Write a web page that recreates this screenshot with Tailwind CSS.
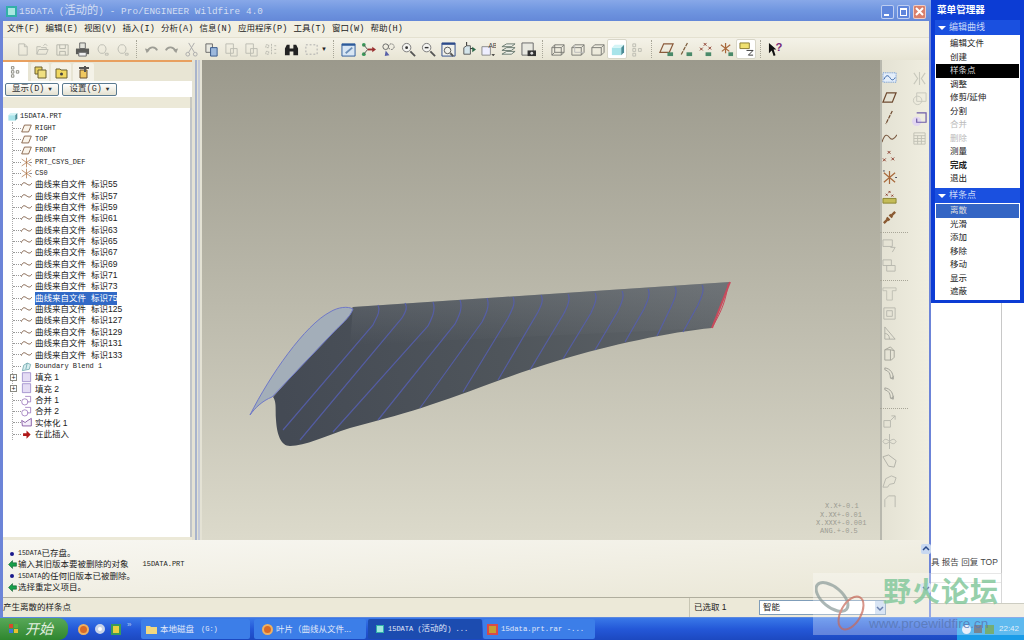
<!DOCTYPE html>
<html lang="en">
<head>
    <meta charset="UTF-8">
    <meta name="viewport" content="width=device-width, initial-scale=1.0">
    <title>15DATA - Pro/ENGINEER Wildfire 4.0</title>
    <script src="https://cdn.jsdelivr.net/npm/@tailwindcss/browser@4"></script>
</head>
<body class="bg-white">
    <!-- Icon sprite -->
    <svg class="hidden">
        <symbol id="new" viewBox="0 0 16 16"><path d="M4 2h6l3 3v9H4zM10 2v3h3" fill="none" stroke="#bcbcb2"/></symbol>
        <symbol id="open" viewBox="0 0 16 16"><path d="M2 13V5h4l1 1h5v2M2 13l2-5h10l-2 5zM9 4l2-2 2 2" fill="none" stroke="#bcbcb2"/></symbol>
        <symbol id="save" viewBox="0 0 16 16"><path d="M2 3h12v11H2zM5 3v4h6V3M5 14v-4h6v4" fill="none" stroke="#b4b4aa"/></symbol>
        <symbol id="print" viewBox="0 0 16 16"><path d="M5 1h6v6H5z" fill="#e4e4dc" stroke="#666"/><path d="M1 7h14v6H1z" fill="#5b5b58"/><path d="M4 11h8v4H4z" fill="#eee" stroke="#666"/></symbol>
        <symbol id="fade1" viewBox="0 0 16 16"><path d="M6 3h3a5 5 0 0 1 0 9H6a5 5 0 0 1 0-9zM11 12h3v2h-3z" fill="none" stroke="#bcbcb2"/></symbol>
        <symbol id="undo" viewBox="0 0 16 16"><path d="M4 10c1-5 8-6 10-1" fill="none" stroke="#9d9d95" stroke-width="2"/><path d="M1 7l5 1-3 4z" fill="#9d9d95"/></symbol>
        <symbol id="redo" viewBox="0 0 16 16"><path d="M12 10C11 5 4 4 2 9" fill="none" stroke="#9d9d95" stroke-width="2"/><path d="M15 7l-5 1 3 4z" fill="#9d9d95"/></symbol>
        <symbol id="cut" viewBox="0 0 16 16"><path d="M5 1l6 10M11 1L5 11" stroke="#aaa" fill="none"/><circle cx="4" cy="13" r="2" fill="none" stroke="#aaa"/><circle cx="12" cy="13" r="2" fill="none" stroke="#aaa"/></symbol>
        <symbol id="copy" viewBox="0 0 16 16"><path d="M2 2h7v9H2z" fill="#e8e8e0" stroke="#666"/><path d="M7 6h7v9H7z" fill="#9cb8dc" stroke="#33558a"/></symbol>
        <symbol id="paste" viewBox="0 0 16 16"><path d="M2 2h8v10H2zM7 7h7v8H7z" fill="none" stroke="#bcbcb2"/></symbol>
        <symbol id="sym" viewBox="0 0 16 16"><path d="M2 3h3v3H2zM2 10h3v3H2zM8 2v12M11 4h3M11 8h3M11 12h3" fill="none" stroke="#b8b8ae" stroke-dasharray="2 1"/></symbol>
        <symbol id="binoc" viewBox="0 0 16 16"><path d="M1 14V7l2-4h3v11zM10 14V3h3l2 4v7zM6 7h4v3H6z" fill="#222"/></symbol>
        <symbol id="dash" viewBox="0 0 16 16"><path d="M2 3h12v10H2z" fill="none" stroke="#aaa" stroke-dasharray="2 2"/></symbol>
        <symbol id="fit" viewBox="0 0 16 16"><path d="M1 2h14v13H1z" fill="#d8e6f4" stroke="#2c5a9a"/><path d="M1 2h14v2H1z" fill="#2c5a9a"/><path d="M5 12l7-6" stroke="#6c8fb8" stroke-width="2"/></symbol>
        <symbol id="repaint" viewBox="0 0 16 16"><circle cx="3" cy="3" r="2" fill="#3a9a5a"/><circle cx="3" cy="13" r="2" fill="#3a9a5a"/><path d="M3 3l4 5-4 5" fill="none" stroke="#555"/><path d="M7 8h6" stroke="#9a3030" stroke-width="2"/><path d="M12 5l4 3-4 3z" fill="#9a3030"/></symbol>
        <symbol id="spin" viewBox="0 0 16 16"><circle cx="5" cy="5" r="3" fill="none" stroke="#666"/><circle cx="11" cy="5" r="3" fill="none" stroke="#666" stroke-dasharray="2 1"/><path d="M5 9l4 5-5 1z" fill="#5a62a8"/></symbol>
        <symbol id="zoomin" viewBox="0 0 16 16"><circle cx="6" cy="6" r="4.5" fill="#f4f4f0" stroke="#777"/><circle cx="6" cy="6" r="1.5" fill="#333"/><path d="M10 10l5 5" stroke="#555" stroke-width="2"/></symbol>
        <symbol id="zoomout" viewBox="0 0 16 16"><circle cx="6" cy="6" r="4.5" fill="#f4f4f0" stroke="#777"/><path d="M4 6h4" stroke="#333" stroke-width="1.5"/><path d="M10 10l5 5" stroke="#555" stroke-width="2"/></symbol>
        <symbol id="refit" viewBox="0 0 16 16"><path d="M1 1h14v14H1z" fill="#f0f0ea" stroke="#2c4a8a"/><path d="M1 1h14v2H1z" fill="#2c4a8a"/><circle cx="7" cy="9" r="3.5" fill="none" stroke="#555"/><path d="M10 12l3 3" stroke="#555" stroke-width="2"/></symbol>
        <symbol id="orient" viewBox="0 0 16 16"><path d="M3 6l3-2h4v9H3z" fill="#d4e4ea" stroke="#555"/><path d="M6 0v4" stroke="#222"/><path d="M10 7h3" stroke="#222"/><path d="M12 5l4 3-4 3z" fill="#2e6a4a"/></symbol>
        <symbol id="saved" viewBox="0 0 16 16"><path d="M1 5h9v9H1z" fill="#eef" stroke="#888"/><text x="8" y="6" font-size="7" fill="#444" font-family="Liberation Sans">AB</text><path d="M11 13h4l-2 2z" fill="#222"/></symbol>
        <symbol id="layers" viewBox="0 0 16 16"><path d="M1 5l5-3h9l-4 3zM1 9l5-3h9l-4 3zM1 13l5-3h9l-4 3z" fill="#eef0e8" stroke="#68786e"/></symbol>
        <symbol id="cam" viewBox="0 0 16 16"><path d="M1 1h12v13H1z" fill="#e8e8e0" stroke="#666"/><path d="M7 9h9v6H7z" fill="#333"/><circle cx="11.500" cy="12" r="1.500" fill="#ddd"/></symbol>
        <symbol id="wire" viewBox="0 0 16 16"><path d="M2 6l3-3h10v8l-3 3H2zM2 6h10v8M12 6l3-3M5 3v8h10M5 11l-3 3" fill="none" stroke="#7a7a74"/></symbol>
        <symbol id="hid" viewBox="0 0 16 16"><path d="M2 6l3-3h10v8l-3 3H2zM2 6h10v8M12 6l3-3" fill="none" stroke="#7a7a74"/><path d="M5 3v8h10" fill="none" stroke="#bbb"/></symbol>
        <symbol id="nohid" viewBox="0 0 16 16"><path d="M2 6l3-3h10v8l-3 3H2zM2 6h10v8M12 6l3-3" fill="none" stroke="#7a7a74"/></symbol>
        <symbol id="shade" viewBox="0 0 16 16"><path d="M2 6h10v8H2z" fill="#a8e4ea"/><path d="M2 6l3-3h10l-3 3z" fill="#d4f4f6"/><path d="M12 6l3-3v8l-3 3z" fill="#4a8c96"/></symbol>
        <symbol id="mtree" viewBox="0 0 16 16"><path d="M3 2h3v3H3zM3 7h3v3H3zM3 12h3v3H3zM9 7h3v3H9z" fill="none" stroke="#77776e"/></symbol>
        <symbol id="mtreef" viewBox="0 0 16 16"><path d="M3 2h3v3H3zM3 7h3v3H3zM3 12h3v3H3zM9 7h3v3H9z" fill="none" stroke="#bcbcb2"/></symbol>
        <symbol id="plane" viewBox="0 0 16 16"><path d="M5 3h10l-4 10H1z" fill="none" stroke="#6e4a30" stroke-width="1.300"/></symbol>
        <symbol id="planeg" viewBox="0 0 16 16"><path d="M5 2h10l-4 9H1z" fill="none" stroke="#8a5a3a" stroke-width="1.300"/><path d="M9 11h6v4H9z" fill="#4a8a6a"/></symbol>
        <symbol id="axisg" viewBox="0 0 16 16"><path d="M9 1L2 14" stroke="#7a5a3a" stroke-dasharray="4 1" stroke-width="1.300"/><path d="M8 11h6v4H8z" fill="#4a8a6a"/></symbol>
        <symbol id="ptsg" viewBox="0 0 16 16"><path d="M5 1l3 3M8 1L5 4M1 6l3 3M4 6L1 9M10 5l3 3M13 5l-3 3" stroke="#8a3a2a"/><path d="M7 11h6v4H7z" fill="#4a8a6a"/></symbol>
        <symbol id="csysg" viewBox="0 0 16 16"><path d="M7 1v11M2 3l9 7M12 3l-9 7" stroke="#a8683a" stroke-width="1.300"/><path d="M10 11h5v4h-5z" fill="#4a8a6a"/></symbol>
        <symbol id="annot" viewBox="0 0 16 16"><path d="M1 1h10v6H1z" fill="#f0e070" stroke="#8a7a30"/><path d="M8 9h7l-5 5h5" fill="none" stroke="#333"/></symbol>
        <symbol id="help" viewBox="0 0 16 16"><path d="M1 1l8 7H6l2 6-2 1-2-6-3 3z" fill="#111"/><text x="8" y="10" font-size="12" font-weight="700" fill="#7a2a7a" font-family="Liberation Sans">?</text></symbol>
        <symbol id="sketch" viewBox="0 0 16 16"><path d="M1 3h14v10H1z" fill="#e4eefa" stroke="#5a8ad0" stroke-dasharray="1 1"/><path d="M2 10c3-6 5-4 7-1s4 1 5-1" fill="none" stroke="#2a5aa0"/></symbol>
        <symbol id="axis" viewBox="0 0 16 16"><path d="M11 1L4 15" stroke="#6e4a30" stroke-dasharray="4 1" stroke-width="1.300"/></symbol>
        <symbol id="curve" viewBox="0 0 16 16"><path d="M0 13C3 3 6 5 8 8s5 2 8-3" fill="none" stroke="#7a5a42" stroke-width="1.200"/></symbol>
        <symbol id="pts" viewBox="0 0 16 16"><path d="M6 1l3 3M9 1L6 4M1 9l3 3M4 9l-3 3M10 8l3 3M13 8l-3 3" stroke="#8a3a2a"/></symbol>
        <symbol id="csys" viewBox="0 0 16 16"><path d="M8 1v14M2 3l12 10M14 3L2 13" stroke="#a8683a" stroke-width="1.300"/><path d="M1 1h2M14 8h2" stroke="#445"/></symbol>
        <symbol id="ptsy" viewBox="0 0 16 16"><path d="M7 1l2 2M9 1L7 3M4 4l2 2M6 4L4 6M10 5l2 2M12 5l-2 2" stroke="#8a3a2a"/><path d="M1 9h14v5H1z" fill="#c4bc58" stroke="#8a8430"/></symbol>
        <symbol id="chain" viewBox="0 0 16 16"><path d="M2 14l4-4M10 6l4-4M5 8l3 3M8 5l3 3" stroke="#8a5a32" stroke-width="2.500" fill="none"/></symbol>
        <symbol id="mirror" viewBox="0 0 16 16"><path d="M8 1v14M2 2l4 6-4 6M14 2l-4 6 4 6" fill="none" stroke="#c8c8bc" stroke-width="1.200"/></symbol>
        <symbol id="trans" viewBox="0 0 16 16"><path d="M5 2h10v9H5z" fill="none" stroke="#c8c8bc"/><circle cx="6" cy="10" r="4.500" fill="none" stroke="#c8c8bc"/></symbol>
        <symbol id="purple" viewBox="0 0 16 16"><circle cx="5" cy="11" r="5" fill="#e2d6f0"/><path d="M5 2h10v10H5v-4" fill="none" stroke="#6e5ca8" stroke-width="1.300"/></symbol>
        <symbol id="grid" viewBox="0 0 16 16"><path d="M2 2h12v12H2zM2 5h12M2 8h12M2 11h12M6 5v9M10 5v9" fill="none" stroke="#c0c0b4"/></symbol>
        <symbol id="box7" viewBox="0 0 16 16"><path d="M1 2h10v7H1zM9 10h5l-3 5" fill="none" stroke="#b8b8ae"/></symbol>
        <symbol id="box2" viewBox="0 0 16 16"><path d="M1 2h9v6H1zM5 8h9v6H5z" fill="none" stroke="#b8b8ae"/></symbol>
        <symbol id="tee" viewBox="0 0 16 16"><path d="M1 2h14v3h-4v10H5V5H1z" fill="none" stroke="#c0c0b4"/></symbol>
        <symbol id="inset" viewBox="0 0 16 16"><path d="M2 2h12v12H2zM5 5h6v6H5z" fill="none" stroke="#b8b8ae"/></symbol>
        <symbol id="draft" viewBox="0 0 16 16"><path d="M3 1v13h11zM3 8c3 0 5 2 5 6" fill="none" stroke="#b0b0a6"/></symbol>
        <symbol id="rib" viewBox="0 0 16 16"><path d="M3 4l6-3 4 4v7l-3 3H3zM3 4h6v11M9 4l4 1" fill="none" stroke="#a4a49a"/></symbol>
        <symbol id="round" viewBox="0 0 16 16"><path d="M3 2c6 1 9 5 9 12l-3-1C9 8 7 5 3 4z" fill="none" stroke="#a0a098"/><path d="M9 13l3 1 1-4z" fill="#a8a8a0"/></symbol>
        <symbol id="move" viewBox="0 0 16 16"><path d="M2 7h7v7H2zM9 7l5-5M10 2h4v4" fill="none" stroke="#b8b8ae"/></symbol>
        <symbol id="spindle" viewBox="0 0 16 16"><path d="M8 0v16M1 8c2-4 5-2 7 0s5 4 7 0c-2-4-5-2-7 0s-5 4-7 0z" fill="none" stroke="#b8b8ae"/></symbol>
        <symbol id="poly" viewBox="0 0 16 16"><path d="M1 3l6-2 8 6-2 7-6-1z" fill="none" stroke="#b0b0a6"/></symbol>
        <symbol id="blend" viewBox="0 0 16 16"><path d="M1 14l3-9 6-3 5 2-2 6-5 1-2 3z" fill="none" stroke="#b8b8ae"/></symbol>
        <symbol id="flat" viewBox="0 0 16 16"><path d="M3 14V6l4-4h7v12" fill="none" stroke="#b8b8ae"/></symbol>
        <symbol id="twave" viewBox="0 0 16 16"><path d="M0 10c3-6 5-5 8-3s5 3 8-1" fill="none" stroke="#7c5a42" stroke-width="1.400"/></symbol>
        <symbol id="tplane" viewBox="0 0 16 16"><path d="M5 3h10l-4 10H1z" fill="#faf4ea" stroke="#7a5238" stroke-width="1.200"/></symbol>
        <symbol id="tcsys" viewBox="0 0 16 16"><path d="M8 1v14M1 3l14 10M15 3L1 13" stroke="#a86a3a"/><path d="M12 8h4" stroke="#556"/></symbol>
        <symbol id="tsurf" viewBox="0 0 16 16"><path d="M2 14l2-8 5-3 5 2-2 7z" fill="#d8eef0" stroke="#5a9aa0"/><path d="M9 3l-2 9" stroke="#5a9aa0"/></symbol>
        <symbol id="tfill" viewBox="0 0 16 16"><path d="M2 1h12v13H2z" fill="#e4dcf4" stroke="#8a78c0"/></symbol>
        <symbol id="tmerge" viewBox="0 0 16 16"><circle cx="5.500" cy="10" r="4.500" fill="#fff" stroke="#8a60b0"/><path d="M6 2h8v8H9" fill="none" stroke="#8a60b0"/></symbol>
        <symbol id="tsolid" viewBox="0 0 16 16"><path d="M1 5l5 3 4-3 5-3v11H2z" fill="#f4eefa" stroke="#7a4a9a" stroke-width="1.200"/></symbol>
        <symbol id="tins" viewBox="0 0 16 16"><path d="M3 6h5V2l6 6-6 6v-4H3z" fill="#b01818"/></symbol>
        <symbol id="chev" viewBox="0 0 8 8"><path d="M1 5l3-3 3 3" fill="none" stroke="#2a4a8a" stroke-width="1.500"/></symbol>
        <symbol id="chevd" viewBox="0 0 8 8"><path d="M1 3l3 3 3-3" fill="none" stroke="#2a4a8a" stroke-width="1.500"/></symbol>
    </svg>

    <div class="relative w-[1024px] h-[640px] overflow-hidden flex flex-col font-['Liberation_Sans','Noto_Sans_CJK_SC',sans-serif]">
        <div class="flex h-[617px]">
            <!-- Main window -->
            <div class="w-[931px] flex flex-col border-l-[3px] border-r-2 border-[#6c84d8] bg-[#ece9d8]">
                <!-- Title bar -->
                <div class="-ml-[3px] -mr-[2px] h-[21px] shrink-0 flex items-center pt-[2px] pl-[6px] pr-[5px] bg-gradient-to-b from-[#88a8e8] via-[#7096e0] to-[#6488d8]">
                    <svg class="w-[11px] h-[11px] mr-[2px]" viewBox="0 0 11 11"><rect width="11" height="11" fill="#32b0a8"/><rect x="2" y="2" width="7" height="7" fill="#a8e8e0"/></svg>
                    <span class="text-[11.200px] text-[#d4def2] tracking-[0.1px] font-['Liberation_Mono','Noto_Sans_CJK_SC',monospace] whitespace-pre"><span class="text-[9.300px]">15DATA (</span>活动的<span class="text-[9.300px]">) - Pro/ENGINEER Wildfire 4.0</span></span>
                    <div class="ml-auto flex gap-[3px]">
                        <div class="w-[13px] h-[14px] rounded-[2px] border border-white/60 bg-[#5f86dc] flex items-end justify-start p-[2px]"><div class="w-[5px] h-[2px] bg-white"></div></div>
                        <div class="w-[13px] h-[14px] rounded-[2px] border border-white/60 bg-[#5f86dc] p-[2px]"><div class="w-full h-full border border-t-2 border-white"></div></div>
                        <div class="w-[13px] h-[14px] rounded-[2px] border border-white/60 bg-[#d8806c] flex items-center justify-center"><svg class="w-[9px] h-[9px]" viewBox="0 0 9 9"><path d="M1 1l7 7M8 1L1 8" stroke="#fff" stroke-width="2"/></svg></div>
                    </div>
                </div>
                <!-- Menu bar -->
                <div class="h-[16px] shrink-0 flex items-center gap-[6.200px] pl-[4px] bg-[#f1efe2] text-[8.500px] text-[#222] font-['Liberation_Mono','Noto_Sans_CJK_SC',monospace]">
                    <span>文件(F)</span><span>编辑(E)</span><span>视图(V)</span><span>插入(I)</span><span>分析(A)</span><span>信息(N)</span><span>应用程序(P)</span><span>工具(T)</span><span>窗口(W)</span><span>帮助(H)</span>
                </div>
                <!-- Toolbar -->
                <div id="toolbar" class="h-[23px] shrink-0 flex items-center pl-[9px] border-t border-[#e4e1d0] bg-gradient-to-b from-[#f4f2e8] to-[#e8e5d4]"></div>

                <div class="h-[480px] shrink-0 flex">
                    <!-- Model tree panel -->
                    <div class="w-[189px] shrink-0 flex flex-col h-[477px]">
                        <div class="h-[21px] shrink-0 flex items-end gap-[2px] bg-[#e8e5d4] border-t-2 border-[#e8a060]">
                            <div class="w-[25px] h-[19px] bg-white flex items-center justify-center"><svg class="w-[13px] h-[13px]"><use href="#mtree"/></svg></div>
                            <div class="w-[18px] h-[18px] ml-[1px] bg-[#f4f2e8] rounded-t-[2px] flex items-center justify-center"><svg class="w-[13px] h-[13px]" viewBox="0 0 13 13"><path d="M1 1h7v7H1z" fill="#e8d060" stroke="#6a6030"/><path d="M4 4h8v8H4z" fill="#f0e080" stroke="#6a6030"/></svg></div>
                            <div class="w-[20px] h-[18px] bg-[#f4f2e8] rounded-t-[2px] flex items-center justify-center"><svg class="w-[13px] h-[13px]" viewBox="0 0 13 13"><path d="M1 3h4l1 1h6v8H1z" fill="#f0d860" stroke="#6a6030"/><circle cx="6.500" cy="8" r="1.500" fill="#444"/></svg></div>
                            <div class="w-[21px] h-[18px] bg-[#f4f2e8] rounded-t-[2px] flex items-center justify-center"><svg class="w-[14px] h-[14px]" viewBox="0 0 14 14"><path d="M3 5h7v8H3z" fill="#f0c860" stroke="#6a5030"/><path d="M2 3h10M8 1v6" stroke="#555" stroke-width="2"/></svg></div>
                        </div>
                        <div class="h-[16px] shrink-0 flex items-center gap-[3px] pl-[2px] bg-white text-[8.500px] text-[#333] font-['Liberation_Mono','Noto_Sans_CJK_SC',monospace]">
                            <div class="w-[54px] h-[13px] flex items-center justify-center gap-[4px] rounded-[2px] border border-[#5a7a90] bg-gradient-to-b from-white to-[#e4e1d0]">显示(D)<span class="text-[6px]">▼</span></div>
                            <div class="w-[55px] h-[13px] flex items-center justify-center gap-[4px] rounded-[2px] border border-[#5a7a90] bg-gradient-to-b from-white to-[#e4e1d0]">设置(G)<span class="text-[6px]">▼</span></div>
                        </div>
                        <div class="h-[11px] shrink-0 bg-[#ece9d8] border-r-2 border-[#c8c8c0]"></div>
                        <div id="modeltree" class="flex-1 bg-white border-r-2 border-[#c0c4c8] pt-[3px] text-[#222] overflow-hidden"></div>
                    </div>
                    <!-- Sash -->
                    <div class="w-[10px] shrink-0 flex justify-center gap-[1px] bg-[#e4e2d4]">
                        <div class="w-[2px] bg-[#a8b4cc] flex items-center justify-center"></div>
                        <div class="w-[2px] bg-[#c4cad8]"></div>
                    </div>
                    <!-- Graphics canvas -->
                    <div class="w-[678px] shrink-0 bg-gradient-to-b from-[#9b998c] to-[#dcdacb]">
                        <svg class="block w-full h-full" viewBox="202 60 678 480">
                            <defs>
                                <linearGradient id="skin" x1="280" y1="400" x2="720" y2="300" gradientUnits="userSpaceOnUse">
                                    <stop offset="0" stop-color="#444a54"/><stop offset="0.5" stop-color="#4f555b"/><stop offset="1" stop-color="#5f6468"/>
                                </linearGradient>
                                <linearGradient id="sheen" x1="0" y1="0" x2="0" y2="1">
                                    <stop offset="0" stop-color="#8b9094" stop-opacity="0.35"/><stop offset="1" stop-color="#8b9094" stop-opacity="0"/>
                                </linearGradient>
                            </defs>
                            <path d="M273 397C277 402 275 412 276 420C277 435 281 446 290 446C305 446 325 436 350 428C380 420 410 412 430 405C470 392 510 375 560 360C610 345 670 332 712 328L730 282L353 307Z" fill="url(#skin)"/>
                            <path d="M353 307L730 282L712 328L350 345Z" fill="url(#sheen)"/>
                            <path d="M250 415C270 375 305 325 330 312C338 307 348 306 353 309C350 318 340 325 330 336L272 397C262 401 255 408 250 415Z" fill="#a3aeb9" stroke="#6f78c8" stroke-width="1"/>
                            <g fill="none" stroke="#565fb0" stroke-width="1.200" opacity="0.85">
                                <path d="M378 305C381 312 376 318 373 325L283 430"/>
                                <path d="M405 303C408 308 405 313 402 318L300 440"/>
                                <path d="M433 302C436 310 432 318 428 326L333 432"/>
                                <path d="M460 300C463 308 459 316 455 324L378 420"/>
                                <path d="M487 298C490 306 486 314 482 322L420 408"/>
                                <path d="M513 297C516 303 512 310 508 318L463 392"/>
                                <path d="M541 295C544 300 541 306 538 312L498 380"/>
                                <path d="M568 294C571 299 567 308 563 315L530 370"/>
                                <path d="M595 293C598 298 594 306 591 313L563 359"/>
                                <path d="M622 291C625 296 621 304 618 311L595 350"/>
                                <path d="M648 289C651 294 647 302 644 309L625 342"/>
                                <path d="M675 287C678 292 674 300 671 307L657 336"/>
                                <path d="M702 285C705 290 701 298 698 305L683 332"/>
                            </g>
                            <path d="M730 282L712 328" stroke="#c84a5c" stroke-width="2" fill="none"/>
                            <path d="M728 284C726 300 722 310 713 326" stroke="#c84a5c" stroke-width="1" fill="none"/>
                            <g font-family="Liberation Mono" font-size="7" fill="#9c9c92">
                                <text x="825" y="508">X.X+-0.1</text>
                                <text x="820" y="517">X.XX+-0.01</text>
                                <text x="816" y="525">X.XXX+-0.001</text>
                                <text x="820" y="533">ANG.+-0.5</text>
                            </g>
                        </svg>
                    </div>
                    <!-- Right toolbars -->
                    <div class="w-[49px] shrink-0 flex border-l-2 border-[#b8b8ae] bg-gradient-to-r from-[#e4e2d4] to-[#f0eee0]">
                        <div id="rail1" class="w-[18px] ml-[-2px] pt-[7px] flex flex-col items-center"></div>
                        <div id="rail2" class="w-[20px] ml-[11px] pt-[8px] flex flex-col items-center"></div>
                    </div>
                </div>

                <!-- Message area -->
                <div class="h-[57px] shrink-0 flex bg-gradient-to-br from-[#f8f7f2] to-[#eae7d6]">
                    <div class="flex-1 pt-[8px] pl-[5px] text-[8.500px] text-[#222] leading-[11.300px]">
                        <div class="flex items-center"><span class="w-[4px] h-[4px] ml-[2px] mr-[4px] rounded-full bg-[#18188c]"></span><span class="font-['Liberation_Mono'] text-[6.500px]">15DATA</span>已存盘。</div>
                        <div class="flex items-center"><svg class="w-[9px] h-[9px]" viewBox="0 0 16 16"><path d="M1 8l7-7v4h7v6H8v4z" fill="#18a04a" stroke="#0a5a2a"/></svg><span class="ml-[1px]">输入其旧版本要被删除的对象</span><span class="ml-[14px] font-['Liberation_Mono'] text-[7px]">15DATA.PRT</span></div>
                        <div class="flex items-center"><span class="w-[4px] h-[4px] ml-[2px] mr-[4px] rounded-full bg-[#18188c]"></span><span class="font-['Liberation_Mono'] text-[6.500px]">15DATA</span>的任何旧版本已被删除。</div>
                        <div class="flex items-center"><svg class="w-[9px] h-[9px]" viewBox="0 0 16 16"><path d="M1 8l7-7v4h7v6H8v4z" fill="#18a04a" stroke="#0a5a2a"/></svg><span class="ml-[1px]">选择重定义项目。</span></div>
                    </div>
                    <div class="w-[11px] mr-[-2px] pt-[4px] flex flex-col justify-between pb-[4px] items-center">
                        <div class="w-[10px] h-[10px] rounded-[2px] bg-[#c8d8f0] p-[1px]"><svg class="w-[8px] h-[8px]"><use href="#chev"/></svg></div>
                        <div class="w-[10px] h-[10px] rounded-[2px] bg-[#c8d8f0] p-[1px]"><svg class="w-[8px] h-[8px]"><use href="#chevd"/></svg></div>
                    </div>
                </div>

                <!-- Status line -->
                <div class="h-[20px] shrink-0 flex items-center border-t border-[#b0ae9e] bg-[#ece9d8] text-[8.500px] text-[#222]">
                    <span class="w-[686px]">产生离散的样条点</span>
                    <span class="w-[70px] h-full flex items-center pl-[4px] border-l border-[#c8c6b4]">已选取 1</span>
                    <div class="w-[127px] h-[15px] pl-[3px] flex items-center justify-between bg-white border border-[#7f9db9]">智能<span class="w-[10px] h-full bg-[#c8d8f0] p-[1px] flex items-center"><svg class="w-[8px] h-[8px]"><use href="#chevd"/></svg></span></div>
                </div>
            </div>

            <!-- Menu manager + page behind it -->
            <div class="w-[93px] flex flex-col bg-white">
                <div class="h-[303px] shrink-0 flex flex-col pl-[4px] pr-[4px] pb-[3px] bg-[#0c3cd4] text-[8.500px] text-[#222]">
                    <div class="h-[20px] shrink-0 flex items-center pl-[2px] text-[9.600px] font-bold text-white">菜单管理器</div>
                    <div class="h-[15px] shrink-0 flex items-center pl-[3px] gap-[3px] text-[9px] text-[#c8d8f8] bg-[#1a50e0]"><span class="w-0 h-0 border-x-[4px] border-t-[4px] border-x-transparent border-t-white"></span>编辑曲线</div>
                    <div class="h-[153px] shrink-0 bg-white pt-[2px]">
                        <div class="h-[13.500px] pl-[15px] leading-[13.500px]">编辑文件</div>
                        <div class="h-[13.500px] pl-[15px] leading-[13.500px]">创建</div>
                        <div class="h-[13.500px] pl-[14px] leading-[13.500px] bg-black text-[#ddd] mx-[1px]">样条点</div>
                        <div class="h-[13.500px] pl-[15px] leading-[13.500px]">调整</div>
                        <div class="h-[13.500px] pl-[15px] leading-[13.500px]">修剪/延伸</div>
                        <div class="h-[13.500px] pl-[15px] leading-[13.500px]">分割</div>
                        <div class="h-[13.500px] pl-[15px] leading-[13.500px] text-[#bbb]">合并</div>
                        <div class="h-[13.500px] pl-[15px] leading-[13.500px] text-[#bbb]">删除</div>
                        <div class="h-[13.500px] pl-[15px] leading-[13.500px]">测量</div>
                        <div class="h-[13.500px] pl-[15px] leading-[13.500px] font-bold">完成</div>
                        <div class="h-[13.500px] pl-[15px] leading-[13.500px]">退出</div>
                    </div>
                    <div class="h-[15px] shrink-0 flex items-center pl-[3px] gap-[3px] text-[9px] text-[#c8d8f8] bg-[#1a50e0]"><span class="w-0 h-0 border-x-[4px] border-t-[4px] border-x-transparent border-t-white"></span>样条点</div>
                    <div class="flex-1 bg-white pt-[1px]">
                        <div class="h-[13.500px] pl-[14px] leading-[13.500px] bg-[#3465c4] text-[#ddd] mx-[1px]">离散</div>
                        <div class="h-[13.500px] pl-[15px] leading-[13.500px]">光滑</div>
                        <div class="h-[13.500px] pl-[15px] leading-[13.500px]">添加</div>
                        <div class="h-[13.500px] pl-[15px] leading-[13.500px]">移除</div>
                        <div class="h-[13.500px] pl-[15px] leading-[13.500px]">移动</div>
                        <div class="h-[13.500px] pl-[15px] leading-[13.500px]">显示</div>
                        <div class="h-[13.500px] pl-[15px] leading-[13.500px]">遮蔽</div>
                    </div>
                </div>
                <div class="flex-1 flex flex-col text-[8.500px] text-[#444]">
                    <div class="flex-1 flex">
                        <div class="w-[71px] flex flex-col border-r border-[#c8c8c8]">
                            <div class="h-[249px] shrink-0"></div>
                            <div class="h-[22px] shrink-0 flex items-center border-b border-[#ddd] whitespace-nowrap overflow-hidden">具 报告 回复 TOP</div>
                            <div class="h-[8px] shrink-0"></div>
                            <div class="flex-1 border-t border-[#ddd]"></div>
                        </div>
                        <div class="flex-1"></div>
                    </div>
                    <div class="h-[14px] shrink-0 bg-[#ece9d8] border-t border-[#b8b8a8]"></div>
                </div>
            </div>
        </div>

        <!-- Windows taskbar -->
        <div class="h-[23px] shrink-0 flex items-center text-[#e0e8f8] text-[8.500px] bg-gradient-to-b from-[#3a78e8] via-[#2458d8] to-[#1c48c0] border-t border-[#5a88e0]">
            <div class="w-[68px] h-full flex items-center pl-[8px] gap-[5px] rounded-r-[9px] bg-gradient-to-b from-[#58a858] to-[#2e862e]">
                <svg class="w-[12px] h-[12px]" viewBox="0 0 12 12"><path d="M1 1h4v4H1z" fill="#d84a2a"/><path d="M6 1h4v4H6z" fill="#58b040"/><path d="M1 6h4v4H1z" fill="#3a78d8"/><path d="M6 6h4v4H6z" fill="#e8c030"/></svg>
                <span class="italic text-[14px] text-[#e4f0e0]">开始</span>
            </div>
            <div class="w-[73px] flex items-center pl-[10px] gap-[6px]">
                <span class="w-[11px] h-[11px] rounded-full bg-[#d86a28] border-2 border-[#f0b060]"></span>
                <span class="w-[10px] h-[10px] rounded-full bg-white border-[3px] border-[#c8d4e8]"></span>
                <span class="w-[10px] h-[11px] bg-[#e8d040] border-2 border-[#3a9a5a]"></span>
                <span class="text-[8px] text-[#b0c8f0] -mt-[8px]">»</span>
            </div>
            <div class="w-[109px] h-[20px] flex items-center gap-[3px] pl-[5px] rounded-[2px] bg-[#3c7ee8]"><svg class="w-[11px] h-[11px]" viewBox="0 0 11 11"><path d="M0 2h4l1 1h6v7H0z" fill="#f0d880"/></svg>本地磁盘 <span class="font-['Liberation_Mono'] text-[7px] ml-[4px]">(G:)</span></div>
            <div class="w-[112px] h-[20px] ml-[4px] flex items-center gap-[3px] pl-[8px] rounded-[2px] bg-[#3c7ee8] whitespace-nowrap"><span class="w-[11px] h-[11px] rounded-full bg-[#d86a28] border-2 border-[#f0b060]"></span>叶片（曲线从文件...</div>
            <div class="w-[114px] h-[20px] ml-[2px] flex items-center gap-[4px] pl-[8px] rounded-[2px] bg-[#1c4cb0]"><span class="w-[8px] h-[8px] bg-[#a0e8e0] border border-[#30b0a8]"></span><span class="whitespace-nowrap font-['Liberation_Mono','Noto_Sans_CJK_SC',monospace]"><span class="text-[7px]">15DATA (</span>活动的<span class="text-[7px]">) ...</span></span></div>
            <div class="w-[112px] h-[20px] ml-[1px] flex items-center gap-[3px] pl-[4px] rounded-[2px] bg-[#3c7ee8] whitespace-nowrap font-['Liberation_Mono'] text-[7.300px]"><span class="w-[11px] h-[11px] bg-[#c8a030] border-2 border-[#d84a4a]"></span>15data.prt.rar -...</div>
            <div class="ml-auto w-[67px] h-full flex items-center gap-[3px] pl-[5px] bg-[#1a9ce8] text-[8px] text-[#d8e8f8]">
                <span class="w-[9px] h-[9px] rounded-full bg-[#e0e8f8]"></span>
                <span class="w-[8px] h-[8px] bg-[#405060]"></span>
                <span class="w-[9px] h-[9px] bg-[#3a8a3a]"></span>
                <span class="ml-[2px]">22:42</span>
            </div>
        </div>

        <!-- Forum watermark, sits over everything -->
        <div class="absolute left-[813px] top-[573px] w-[211px] h-[62px] bg-white/30 pointer-events-none">
            <svg class="absolute left-[2px] top-[4px] w-[56px] h-[54px] opacity-70" viewBox="0 0 56 54"><ellipse cx="17" cy="20" rx="19" ry="10" transform="rotate(40 17 20)" fill="none" stroke="#8a9a98" stroke-width="3"/><ellipse cx="36" cy="36" rx="10" ry="18" transform="rotate(30 36 36)" fill="none" stroke="#c86858" stroke-width="2"/></svg>
            <div class="absolute left-[70px] top-[5px] text-[28px] leading-[30px] font-bold tracking-[1px] text-[#84c89c]/85 whitespace-nowrap">野火论坛</div>
            <div class="absolute left-[56px] top-[43px] text-[13.500px] leading-[16px] text-[#5a7ab8]/90 whitespace-nowrap">www.proewildfire.cn</div>
        </div>
    </div>

    <script>
        // Top toolbar: icon id, "sep" for a divider, "on:" for a pressed button
        const tools = ["new","open","save","print","fade1","fade1","sep","undo","redo","cut","copy","paste","paste","sym","binoc","dash","drop","sep",
            "fit","repaint","spin","zoomin","zoomout","refit","orient","saved","layers","cam","sep",
            "wire","hid","nohid","on:shade","mtreef","sep","planeg","axisg","ptsg","csysg","on:annot","sep","help"];
        document.getElementById("toolbar").innerHTML = tools.map(t => {
            if (t === "sep") return `<span class="w-[9px] h-[18px] flex justify-center"><span class="border-l border-dotted border-[#a8a698]"></span></span>`;
            if (t === "drop") return `<span class="w-[8px] text-[6px] text-[#222]">▼</span>`;
            const on = t.startsWith("on:");
            const id = on ? t.slice(3) : t;
            return `<span class="w-5 h-[20px] flex items-center justify-center ${on ? "bg-white rounded-[2px] border border-[#d8d6c8]" : ""}"><svg class="w-[15px] h-[15px]"><use href="#${id}"/></svg></span>`;
        }).join("");

        // Right side rails
        const railCell = id => id === "sep"
            ? `<span class="w-[28px] h-[6px] mb-[2px] ml-[10px] shrink-0 border-b border-dotted border-[#a8a698]"></span>`
            : `<span class="h-[20px] shrink-0 flex items-center justify-center"><svg class="w-[15px] h-[15px]"><use href="#${id}"/></svg></span>`;
        document.getElementById("rail1").innerHTML = ["sketch","plane","axis","curve","pts","csys","ptsy","chain","sep","box7","box2","sep","tee","inset","draft","rib","round","round","sep","move","spindle","poly","blend","flat"].map(railCell).join("");
        document.getElementById("rail2").innerHTML = ["mirror","trans","purple","grid"].map(railCell).join("");

        // Model tree rows
        const curve = n => ({ icon: "twave", text: "曲线来自文件", tag: "标识" + n, sel: n === 75 });
        const rows = [
            { icon: "tplane", mono: "RIGHT" }, { icon: "tplane", mono: "TOP" }, { icon: "tplane", mono: "FRONT" },
            { icon: "tcsys", mono: "PRT_CSYS_DEF" }, { icon: "tcsys", mono: "CS0" },
            ...[55,57,59,61,63,65,67,69,71,73,75,125,127,129,131,133].map(curve),
            { icon: "tsurf", mono: "Boundary Blend 1" },
            { icon: "tfill", text: "填充 1", plus: true }, { icon: "tfill", text: "填充 2", plus: true },
            { icon: "tmerge", text: "合并 1" }, { icon: "tmerge", text: "合并 2" },
            { icon: "tsolid", text: "实体化 1" }, { icon: "tins", text: "在此插入" }
        ];
        const rowHtml = r => {
            const label = r.mono
                ? `<span class="font-['Liberation_Mono'] text-[7px]">${r.mono}</span>`
                : `<span class="text-[8.500px] ${r.sel ? "bg-[#3169c6] text-white" : ""}">${r.text}${r.tag ? `<span class="ml-[5px]">${r.tag}</span>` : ""}</span>`;
            const handle = r.plus
                ? `<span class="w-[7px] h-[7px] ml-[-3px] mr-[4px] shrink-0 border border-[#8a8a82] bg-white text-[7px] leading-[5px] text-center">+</span>`
                : `<span class="w-[8px] shrink-0 border-t border-dotted border-[#999]"></span>`;
            return `<div class="h-[11.350px] flex items-center whitespace-pre">${handle}<svg class="w-[11px] h-[11px] mr-[3px] shrink-0"><use href="#${r.icon}"/></svg>${label}</div>`;
        };
        document.getElementById("modeltree").innerHTML =
            `<div class="h-[11.350px] flex items-center pl-[4px] whitespace-pre"><svg class="w-[11px] h-[11px] mr-[2px] shrink-0"><use href="#shade"/></svg><span class="font-['Liberation_Mono'] text-[7px]">15DATA.PRT</span></div>` +
            `<div class="ml-[9px] border-l border-dotted border-[#aaa]">${rows.map(rowHtml).join("")}</div>`;
    </script>
</body>
</html>
